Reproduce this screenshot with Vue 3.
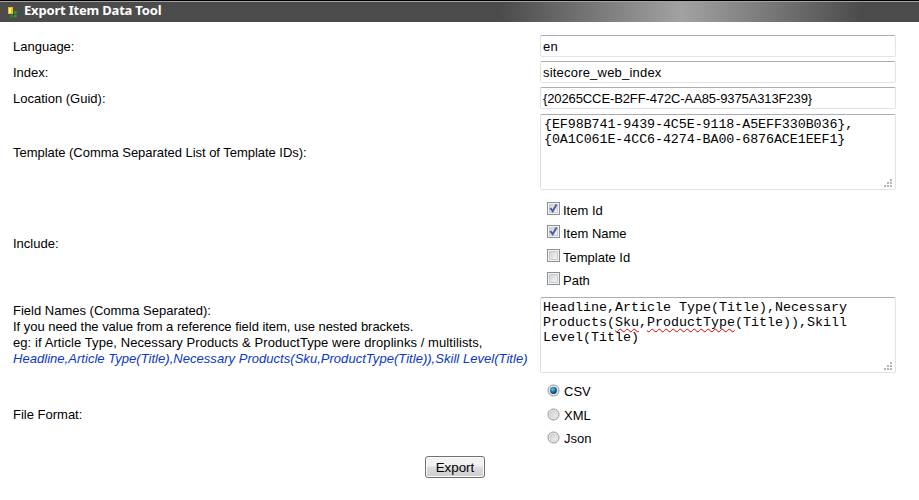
<script setup>
import { ref } from 'vue'

const language = ref('en')
const index = ref('sitecore_web_index')
const location = ref('{20265CCE-B2FF-472C-AA85-9375A313F239}')
const includes = ref([
  { label: 'Item Id', on: true },
  { label: 'Item Name', on: true },
  { label: 'Template Id', on: false },
  { label: 'Path', on: false },
])
const formats = ['CSV', 'XML', 'Json']
const format = ref('CSV')
</script>

<template>
  <div class="page">
    <header class="bar">
      <svg class="logo" width="11" height="12" viewBox="0 0 11 12">
        <rect x="0" y="0" width="5" height="7" fill="#e8b923" />
        <rect x="1" y="1" width="2" height="5" fill="#fff07a" />
        <circle cx="7.5" cy="5.5" r="1.4" fill="#25a52a" />
        <circle cx="3.5" cy="9.2" r="1.4" fill="#1c8f20" />
        <circle cx="7.5" cy="9.2" r="1.4" fill="#25a52a" />
      </svg>
      <h1>Export Item Data Tool</h1>
    </header>
    <form class="form" @submit.prevent>
      <div class="row line"><span class="label">Language:</span><input v-model="language" class="field" /></div>
      <div class="row line"><span class="label">Index:</span><input v-model="index" class="field" /></div>
      <div class="row line"><span class="label">Location (Guid):</span><input v-model="location" class="field guid" /></div>
      <div class="row area">
        <span class="label wide">Template (Comma Separated List of Template IDs):</span>
        <div class="field box">{EF98B741-9439-4C5E-9118-A5EFF330B036},<br />{0A1C061E-4CC6-4274-BA00-6876ACE1EEF1}
          <svg class="grip" width="8" height="8" viewBox="0 0 8 8" fill="#b5b5b5"><path d="M6 0h2v2h-2zM3 3h2v2h-2zM6 3h2v2h-2zM0 6h2v2h-2zM3 6h2v2h-2zM6 6h2v2h-2z" /></svg>
        </div>
      </div>
      <div class="row include">
        <span class="label">Include:</span>
        <div class="options">
          <label v-for="o in includes" :key="o.label" class="option">
            <svg width="13" height="13" viewBox="0 0 13 13" @click="o.on = !o.on">
              <defs>
                <linearGradient id="chk" x1="0" y1="0" x2="1" y2="1"><stop offset="0" stop-color="#cdd1d6" /><stop offset="1" stop-color="#f8f8f8" /></linearGradient>
              </defs>
              <rect x=".5" y=".5" width="12" height="12" fill="#f4f4f4" stroke="#8e8f8f" />
              <rect x="2.5" y="2.5" width="8" height="8" fill="url(#chk)" stroke="#c8ccd1" />
              <path v-if="o.on" d="M3.3 6L5.7 9.2L9.6 2.6" fill="none" stroke="#4a5fa0" stroke-width="2" />
            </svg>
            <span>{{ o.label }}</span>
          </label>
        </div>
      </div>
      <div class="row area">
        <div class="label names">
          <div>Field Names (Comma Separated):</div>
          <div class="hint">If you need the value from a reference field item, use nested brackets.</div>
          <div class="eg">eg: if Article Type, Necessary Products &amp; ProductType were droplinks / multilists,</div>
          <div class="sample">Headline,Article Type(Title),Necessary Products(Sku,ProductType(Title)),Skill Level(Title)</div>
        </div>
        <div class="field box second">Headline,Article Type(Title),Necessary<br />Products(<span class="typo">Sku</span>,<span class="typo">ProductType</span>(Title)),Skill<br />Level(Title)
          <svg class="grip" width="8" height="8" viewBox="0 0 8 8" fill="#b5b5b5"><path d="M6 0h2v2h-2zM3 3h2v2h-2zM6 3h2v2h-2zM0 6h2v2h-2zM3 6h2v2h-2zM6 6h2v2h-2z" /></svg>
        </div>
      </div>
      <div class="row format">
        <span class="label">File Format:</span>
        <div class="options radios">
          <label v-for="f in formats" :key="f" class="option">
            <svg width="13" height="13" viewBox="0 0 13 13" @click="format = f">
              <defs>
                <radialGradient id="dot" cx=".4" cy=".35" r=".65"><stop offset="0" stop-color="#6cc8ee" /><stop offset=".5" stop-color="#1d7fb5" /><stop offset="1" stop-color="#0b3558" /></radialGradient>
                <linearGradient id="well" x1="0" y1="0" x2="1" y2="1"><stop offset="0" stop-color="#c8cacd" /><stop offset="1" stop-color="#f6f6f6" /></linearGradient>
              </defs>
              <circle cx="6.5" cy="6.5" r="5.5" fill="#f4f4f4" stroke="#8e8f8f" />
              <circle cx="6.5" cy="6.5" r="3.8" fill="url(#well)" stroke="#c6c9cc" stroke-width=".7" />
              <circle v-if="format === f" cx="6.5" cy="6.5" r="3.4" fill="url(#dot)" />
            </svg>
            <span>{{ f }}</span>
          </label>
        </div>
      </div>
      <button class="export">Export</button>
    </form>
  </div>
</template>

<style>
body { background: #fff; }
</style>

<style scoped>
.page { width: 919px; height: 500px; overflow: hidden; font: 13px/16px "Liberation Sans", Arial, sans-serif; color: #000; background: #fff; }
.bar { box-sizing: border-box; height: 22px; display: flex; align-items: flex-start; padding-left: 8px; border-top: 1px solid #000; background: linear-gradient(#a3a1a1 0 1px, transparent 1px), linear-gradient(90deg, #4b4b4b 500px, #a2a2a2 682px, #4b4b4b 862px); }
.logo { margin-top: 6px; flex: none; }
h1 { margin: 1px 0 0 5px; font: bold 13px/16px "Noto Sans", sans-serif; letter-spacing: -0.19px; color: #fff; white-space: nowrap; }
.form { display: flex; flex-direction: column; padding: 13px 0 0 13px; }
.row { display: grid; grid-template-columns: 527px 356px; align-items: center; }
.line { height: 22px; margin-bottom: 4px; }
.label { white-space: nowrap; padding-top: 2px; }
.wide { letter-spacing: -0.035px; }
.field { box-sizing: border-box; width: 356px; margin: 0; border: 1px solid #e2e3ea; border-top-color: #abadb3; border-left-color: #dbdfe6; border-radius: 2px; background: #fff; color: #000; }
input.field { height: 22px; padding: 1px 2px 1px; font: 13px/16px "Liberation Sans", Arial, sans-serif; letter-spacing: 0.2px; outline: none; }
input.guid { letter-spacing: -0.11px; }
.area { height: 76px; margin-top: 1px; }
.box { position: relative; height: 76px; padding: 2px 3px; font: 13.333px/15px "Liberation Mono", monospace; letter-spacing: -0.07px; white-space: nowrap; }
.second { padding-left: 2px; letter-spacing: 0; }
.grip { position: absolute; right: 3px; bottom: 2px; }
.typo { text-decoration: underline wavy #e00000 1px; text-underline-offset: 2px; text-decoration-skip-ink: none; }
.include { height: 106px; }
.options { display: flex; flex-direction: column; padding: 4px 0 0 7px; gap: 7.4px; }
.option { display: flex; align-items: flex-start; height: 16px; }
.option svg { margin-right: 3px; flex: none; }
.option span { padding-top: 1px; }
.radios { padding-top: 3px; }
.radios .option span { padding-top: 0; }
.radios .option svg { margin-right: 4px; }
.names { line-height: 16px; padding-top: 0; }
.hint { letter-spacing: -0.03px; }
.eg { letter-spacing: 0.08px; }
.sample { color: #0a38c8; font-style: italic; letter-spacing: 0.035px; }
.format { height: 82px; }
.format > .label { padding-top: 1px; }
.export { box-sizing: border-box; width: 60px; height: 22px; margin: 1px 0 0 412px; padding: 1px 0 0; border: 1px solid #707070; border-radius: 3px; box-shadow: inset 0 0 0 1px #fafafa; background: linear-gradient(#f2f2f2 0 45%, #dddddd 50%, #cfcfcf); font: 13.333px/16px "Liberation Sans", Arial, sans-serif; color: #000; }
</style>
